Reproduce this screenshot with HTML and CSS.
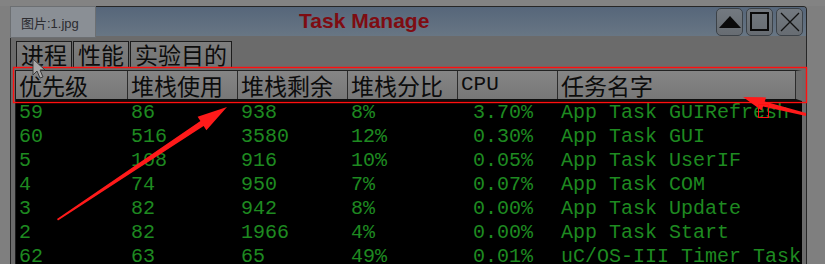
FILE: index.html
```html
<!DOCTYPE html>
<html lang="zh">
  <head>
    <meta charset="UTF-8" />
    <title>Task Manage</title>
    <link rel="stylesheet" href="styles.css">
  </head>
  <body>
    <div class="screen">
      <div class="top-strip"></div>
      <div class="window">
        <div class="titlebar">
          <span class="title">Task Manage</span>
          <div class="controls">
            <div class="ctl"><span class="tri"></span></div>
            <div class="ctl"><span class="sq"></span></div>
            <div class="ctl">
              <svg width="22" height="22" viewBox="0 0 22 22">
                <path d="M2 2 L20 20 M20 2 L2 20" stroke="#111" stroke-width="1.3" />
              </svg>
            </div>
          </div>
        </div>

        <div class="tabs">
          <div class="tab">进程</div>
          <div class="tab">性能</div>
          <div class="tab">实验目的</div>
        </div>

        <div class="panel">
          <div class="grid head">
            <div class="th">优先级</div>
            <div class="th">堆栈使用</div>
            <div class="th">堆栈剩余</div>
            <div class="th">堆栈分比</div>
            <div class="th mono">CPU</div>
            <div class="th">任务名字</div>
          </div>
          <div class="rows">
            <div class="grid row"><span>59</span><span>86</span><span>938</span><span>8%</span><span> 3.70%</span><span>App Task GUIRefresh</span></div>
            <div class="grid row"><span>60</span><span>516</span><span>3580</span><span>12%</span><span> 0.30%</span><span>App Task GUI</span></div>
            <div class="grid row"><span>5</span><span>108</span><span>916</span><span>10%</span><span> 0.05%</span><span>App Task UserIF</span></div>
            <div class="grid row"><span>4</span><span>74</span><span>950</span><span>7%</span><span> 0.07%</span><span>App Task COM</span></div>
            <div class="grid row"><span>3</span><span>82</span><span>942</span><span>8%</span><span> 0.00%</span><span>App Task Update</span></div>
            <div class="grid row"><span>2</span><span>82</span><span>1966</span><span>4%</span><span> 0.00%</span><span>App Task Start</span></div>
            <div class="grid row"><span>62</span><span>63</span><span>65</span><span>49%</span><span> 0.01%</span><span>uC/OS-III Timer Task</span></div>
          </div>
        </div>
      </div>

      <!-- tooltip over the window corner -->
      <div class="tooltip">图片:1.jpg</div>

      <!-- annotations drawn over the screenshot -->
      <svg class="marks" width="825" height="264" viewBox="0 0 825 264">
        <rect x="13.5" y="67.5" width="793" height="35" fill="none" stroke="#ff1010" stroke-width="1.4" />
        <polygon points="57,219 200.4,121 197.6,116.8 227,107 206.4,130.2 203.6,126 58,220.5" fill="#ff1a1a" />
        <polygon points="806,116 763.1,106.4 761.7,110.6 743,97 766.1,97.4 764.7,101.6 806,113" fill="#ff1a1a" />
        <rect x="758.5" y="104.5" width="10" height="13" fill="none" stroke="#ff1010" stroke-width="1" />
        <polygon points="33,59 33,75 37,71 40,78 43,77 40,70 45,70" fill="#a8a8a8" stroke="#3a3a3a" stroke-width="1" />
      </svg>
    </div>
  </body>
</html>
```

FILE: styles.css
```css
body {
  margin: 0;
  background-color: #7f7f7f;
}
.screen {
  width: 825px;
  height: 264px;
  overflow: hidden;
  position: relative;
  background-color: #7f7f7f;
}
.top-strip {
  height: 6px;
  background-color: #838383;
}
.window {
  width: 795px;
  margin-left: 10px;
  background-color: #6b6b6b;
  border: 1px solid #262626;
  border-bottom: none;
  border-radius: 4px 4px 0 0;
}
.titlebar {
  height: 29px;
  display: flex;
  align-items: center;
  justify-content: flex-end;
  position: relative;
  background: linear-gradient(#56667a, #687684);
  border-radius: 3px 3px 0 0;
}
.title {
  position: absolute;
  left: 288px;
  top: 2px;
  font-family: "Liberation Sans", Arial, sans-serif;
  font-weight: bold;
  font-size: 21px;
  color: #7e0c12;
}
.controls {
  display: flex;
  gap: 3px;
  margin-right: 3px;
}
.ctl {
  width: 25px;
  height: 26px;
  border: 1px solid #3c4248;
  border-radius: 5px;
  background: linear-gradient(#737980, #676c72);
  display: flex;
  align-items: center;
  justify-content: center;
}
.tri {
  width: 0;
  height: 0;
  border-left: 11px solid transparent;
  border-right: 11px solid transparent;
  border-bottom: 12px solid #0a0a0a;
}
.sq {
  width: 19px;
  height: 19px;
  border: 2px solid #0a0a0a;
  box-sizing: border-box;
}
.tabs {
  display: flex;
  padding: 4px 0 0 5px;
  box-sizing: border-box;
  margin-top: 1px;
  height: 30px;
}
.tab {
  height: 25px;
  padding: 0 4px;
  margin-right: 1px;
  border: 1px solid #1c1c1c;
  border-bottom: none;
  background: linear-gradient(#7e7e7e, #747474);
  font-family: "Noto Sans CJK SC", sans-serif;
  font-size: 23px;
  line-height: 25px;
  color: #0c0c0c;
}
.panel {
  margin: 3px 0 0 4px;
  border-left: 1px solid #1e1e1e;
  padding-right: 4px;
}
.grid {
  display: grid;
  grid-template-columns: 112px 110px 110px 110px 100px 1fr;
}
.head {
  height: 28px;
  border-top: 1px solid #222;
  border-bottom: 2px solid #0e0e0e;
  background: linear-gradient(#858585, #777777);
  border-right: 6px solid #6d6d6d;
}
.th {
  border-right: 1px solid #2c2c2c;
  padding-left: 3px;
  font-family: "Noto Sans CJK SC", sans-serif;
  font-size: 23px;
  line-height: 28px;
  color: #0c0c0c;
}
.th.mono {
  font-family: "Liberation Mono", monospace;
  font-size: 21px;
}
.rows {
  background-color: #000;
  height: 180px;
}
.row {
  height: 24px;
  font-family: "Liberation Mono", "Courier New", monospace;
  font-size: 20px;
  line-height: 24px;
  color: #1e8a20;
  white-space: pre;
}
.row span {
  padding-left: 3px;
}
.tooltip {
  position: absolute;
  left: 10px;
  top: 6px;
  width: 86px;
  height: 32px;
  background-color: #8a8f95;
  border: 1px solid #6c6f72;
  font-family: "Liberation Sans", "Noto Sans CJK SC", sans-serif;
  font-size: 13px;
  line-height: 34px;
  padding-left: 10px;
  box-sizing: border-box;
  color: #2c2c30;
}
.marks {
  position: absolute;
  left: 0;
  top: 0;
}
```
